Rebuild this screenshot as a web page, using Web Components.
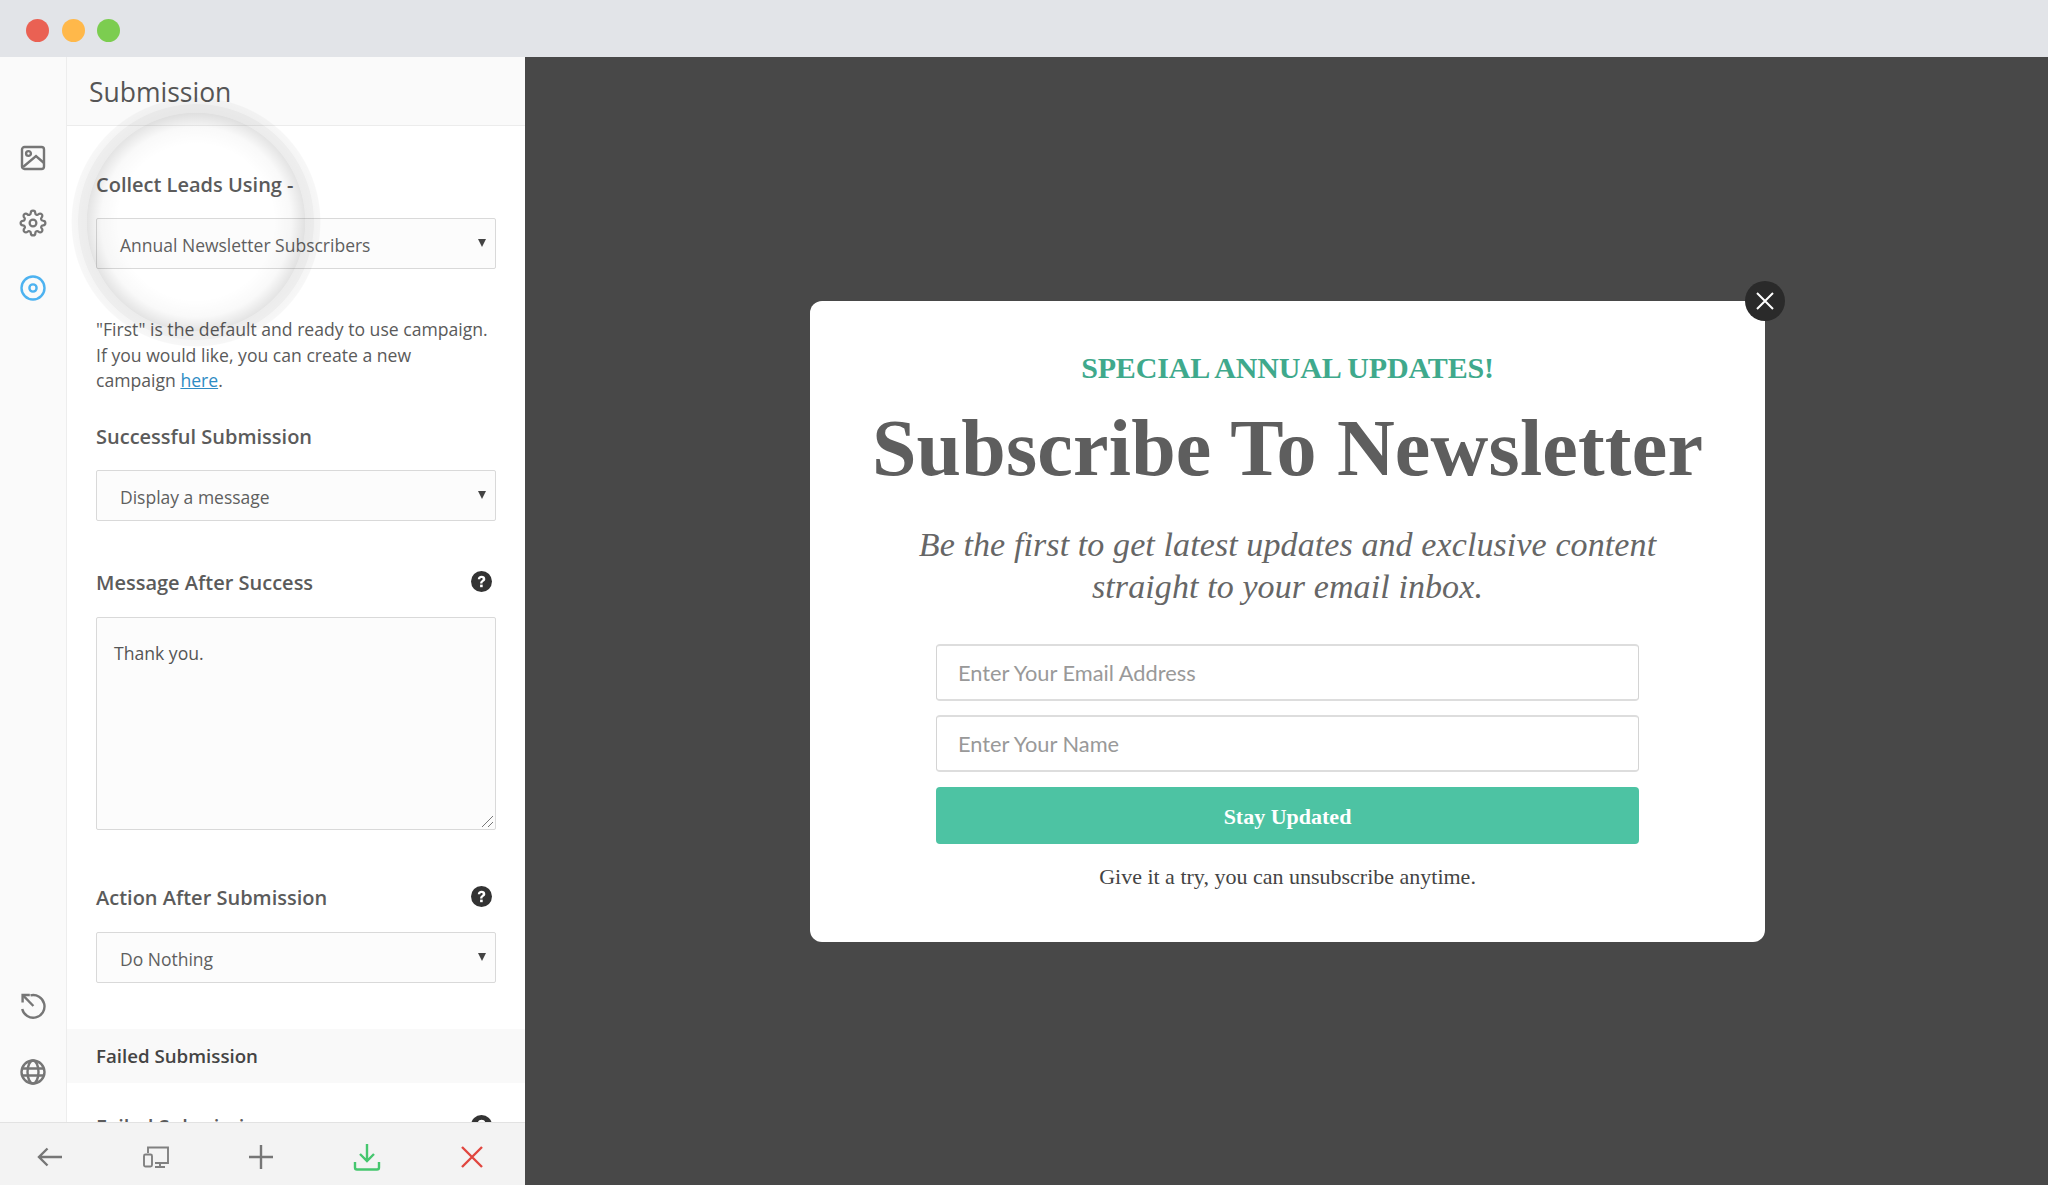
<!DOCTYPE html>
<html>
<head>
<meta charset="utf-8">
<title>Submission</title>
<style>
  html, body { margin: 0; height: 100%; overflow: hidden; }
  body { font-family: "Open Sans", sans-serif; }
</style>
</head>
<body>
<app-window>
  <side-panel slot="panel">
    <field-label>Collect Leads Using -</field-label>
    <field-select class="gap">Annual Newsletter Subscribers</field-select>
    <panel-note>"First" is the default and ready to use campaign. If you would like, you can create a new campaign <a href="#" style="color:#2e8cc4">here</a>.</panel-note>
    <field-label style="margin-top:29px">Successful Submission</field-label>
    <field-select class="gap" style="margin-top:19px">Display a message</field-select>
    <field-label style="margin-top:48px" help>Message After Success</field-label>
    <textarea-box class="gap">Thank you.</textarea-box>
    <field-label style="margin-top:54px" help>Action After Submission</field-label>
    <field-select class="gap">Do Nothing</field-select>
    <section-band>Failed Submission</section-band>
    <field-label style="margin-top:30px" help>Failed Submission</field-label>
  </side-panel>
  <popup-card slot="canvas"></popup-card>
</app-window>

<script>
(function() {
  const icons = {
    image: '<rect x="2" y="2" width="22" height="22" rx="2.5"/><circle cx="8.5" cy="8.5" r="2.4"/><path d="M3 22 16 11l8 7"/>',
    gear: '<g transform="translate(-.5 -.5) scale(1.125)" stroke-width="2"><circle cx="12" cy="12" r="3"/><path d="M19.4 15a1.65 1.65 0 0 0 .33 1.82l.06.06a2 2 0 0 1 0 2.83 2 2 0 0 1-2.83 0l-.06-.06a1.65 1.65 0 0 0-1.82-.33 1.65 1.65 0 0 0-1 1.51V21a2 2 0 0 1-2 2 2 2 0 0 1-2-2v-.09A1.65 1.65 0 0 0 9 19.4a1.65 1.65 0 0 0-1.82.33l-.06.06a2 2 0 0 1-2.83 0 2 2 0 0 1 0-2.83l.06-.06a1.65 1.65 0 0 0 .33-1.82 1.65 1.65 0 0 0-1.51-1H3a2 2 0 0 1-2-2 2 2 0 0 1 2-2h.09A1.65 1.65 0 0 0 4.6 9a1.65 1.65 0 0 0-.33-1.82l-.06-.06a2 2 0 0 1 0-2.83 2 2 0 0 1 2.83 0l.06.06a1.65 1.65 0 0 0 1.82.33H9a1.65 1.65 0 0 0 1-1.51V3a2 2 0 0 1 2-2 2 2 0 0 1 2 2v.09a1.65 1.65 0 0 0 1 1.51 1.65 1.65 0 0 0 1.82-.33l.06-.06a2 2 0 0 1 2.83 0 2 2 0 0 1 0 2.83l-.06.06a1.65 1.65 0 0 0-.33 1.82V9a1.65 1.65 0 0 0 1.51 1H21a2 2 0 0 1 2 2 2 2 0 0 1-2 2h-.09a1.65 1.65 0 0 0-1.51 1z"/></g>',
    target: '<circle cx="13" cy="13" r="11.5"/><circle cx="13" cy="13" r="3.6"/>',
    history: '<path d="M10.5 2.4A11.3 11.3 0 1 1 2.2 16"/><path d="M2.6 9.5V2h7.2"/><path d="M2.8 2.2 13.4 13"/>',
    globe: '<circle cx="13" cy="13" r="11.5"/><ellipse cx="13" cy="13" rx="5.5" ry="11.5"/><path d="M2 9.5h22M2 16.5h22"/>',
    back: '<path d="M25 13H2M10.5 4.5 2 13l8.5 8.5"/>',
    devices: '<path d="M5 9V3.5h20V19H12"/><rect x="1" y="10.5" width="8" height="12" rx="1.5"/><path d="M12 23h10M17 19v4"/>',
    plus: '<path d="M13 1v24M1 13h24"/>',
    save: '<path d="M13 0v17M6 10l7 7 7-7"/><path d="M1 18v5.5a2 2 0 0 0 2 2h20a2 2 0 0 0 2-2V18"/>',
    close: '<path d="M3 3l20 20M23 3 3 23"/>'
  };

  function icon(name, color, width) {
    return `<svg width="26" height="26" viewBox="0 0 26 26" fill="none" stroke="${color}" stroke-width="${width || 2}" style="overflow:visible">${icons[name]}</svg>`;
  }

  const helpIcon = `<svg width="21" height="21" viewBox="0 0 21 21"><circle cx="10.5" cy="10.5" r="10.5" fill="#333"/><path d="M6.8 8.2c0-2.1 1.6-3.4 3.8-3.4 2.1 0 3.7 1.2 3.7 3.1 0 1.5-.9 2.2-1.9 2.8-.7.5-1 .8-1 1.7H9.1c0-1.6.5-2.3 1.5-3 .7-.5 1.1-.8 1.1-1.4 0-.6-.5-1-1.2-1-.8 0-1.2.4-1.3 1.2z" fill="#fff"/><rect x="9.1" y="13.6" width="2.6" height="2.6" fill="#fff"/></svg>`;

  class FieldSelect extends HTMLElement {
    constructor() {
      super();
      this.attachShadow({ mode: "open" }).innerHTML = `
        <style>
          :host { display: flex; align-items: center; box-sizing: border-box; width: 400px; height: 51px;
            padding: 3px 0 0 23px; border: 1px solid #d9d9d9; border-radius: 2px; background: #fcfcfc;
            font-size: 17.5px; color: #5f5f5f; position: relative; }
          :host(.gap) { margin-top: 20px; }
          i { position: absolute; right: 9px; top: 20px; width: 0; height: 0;
            border-left: 4.5px solid transparent; border-right: 4.5px solid transparent; border-top: 8px solid #444; }
        </style><slot></slot><i></i>`;
    }
  }

  class FieldLabel extends HTMLElement {
    constructor() {
      super();
      this.attachShadow({ mode: "open" }).innerHTML = `
        <style>
          :host { display: flex; justify-content: space-between; align-items: center; height: 28px;
            font-size: 20px; font-weight: 600; color: #5b5b5b; }
          span { display: flex; margin-right: 4px; margin-top: -2px; }
        </style><slot></slot><span></span>`;
      if (this.hasAttribute("help")) this.shadowRoot.querySelector("span").innerHTML = helpIcon;
    }
  }

  class PanelNote extends HTMLElement {
    constructor() {
      super();
      this.attachShadow({ mode: "open" }).innerHTML = `
        <style>
          :host { display: block; margin-top: 48px; width: 392px; font-size: 17.6px; line-height: 25.5px; color: #5a5a5a; }
        </style><slot></slot>`;
    }
  }

  class SectionBand extends HTMLElement {
    constructor() {
      super();
      this.attachShadow({ mode: "open" }).innerHTML = `
        <style>
          :host { display: block; margin: 46px -29px 0; padding: 13px 29px; height: 54px; box-sizing: border-box;
            background: #f9f9f9; font-size: 18.7px; font-weight: 600; color: #444; line-height: 28px; }
        </style><slot></slot>`;
    }
  }

  class RailIcon extends HTMLElement {
    constructor() {
      super();
      this.attachShadow({ mode: "open" }).innerHTML = `
        <style>:host { display: flex; width: 26px; height: 26px; } svg { display: block; }</style>
        ${icon(this.getAttribute("name"), this.getAttribute("color") || "#767676", this.getAttribute("sw") || 2.4)}`;
    }
  }

  class TextareaBox extends HTMLElement {
    constructor() {
      super();
      this.attachShadow({ mode: "open" }).innerHTML = `
        <style>
          :host { display: block; box-sizing: border-box; width: 400px; height: 213px; padding: 23px 17px;
            border: 1px solid #d9d9d9; border-radius: 2px; background: #fcfcfc; font-size: 17.6px; line-height: 25px;
            color: #555; position: relative; }
          :host(.gap) { margin-top: 20px; }
          svg { position: absolute; right: 1px; bottom: 1px; }
        </style><slot></slot>
        <svg width="14" height="14" viewBox="0 0 14 14" stroke="#777" stroke-width="1"><path d="M2 13 13 2M8 13l5-5"/></svg>`;
    }
  }

  // the magnifier sits over the first field, that is why it is absolute
  class LensRing extends HTMLElement {
    constructor() {
      super();
      this.attachShadow({ mode: "open" }).innerHTML = `
        <style>
          :host { position: absolute; left: 71px; top: 40px; width: 250px; height: 250px; border-radius: 50%;
            pointer-events: none;
            background: radial-gradient(circle closest-side, rgba(0,0,0,0) 62%, rgba(0,0,0,.025) 76%, rgba(0,0,0,.105) 87%,
              rgba(0,0,0,.075) 87.6%, rgba(0,0,0,.065) 94%, rgba(0,0,0,.04) 94.6%, rgba(0,0,0,.03) 99%, rgba(0,0,0,0) 100%); }
        </style>`;
    }
  }

  class SidePanel extends HTMLElement {
    constructor() {
      super();
      this.attachShadow({ mode: "open" }).innerHTML = `
        <style>
          :host { display: grid; grid-template-columns: 67px 1fr; grid-template-rows: 1fr 63px; width: 525px;
            height: 100%; background: #fff; position: relative; overflow: hidden; }
          .rail { display: flex; flex-direction: column; align-items: center; padding: 88px 1px 0 0; gap: 39px;
            background: #fafafa; border-right: 1px solid #ededed; }
          .rail .push { margin-top: auto; }
          .rail .last { margin-top: 1px; margin-bottom: 37px; }
          .main { overflow: hidden; min-width: 0; }
          .head { height: 69px; box-sizing: border-box; padding: 15px 0 0 22px; background: #fafafa;
            border-bottom: 1px solid #ececec; font-size: 26.5px; color: #555; line-height: 40px; }
          .body { padding: 44px 29px 0; }
          .foot { grid-column: 1 / 3; display: flex; justify-content: space-between; align-items: center;
            padding: 6px 40px 0 37px; background: #f3f3f3; border-top: 1px solid #e2e2e2; }
        </style>
        <div class="rail">
          <rail-icon name="image"></rail-icon>
          <rail-icon name="gear"></rail-icon>
          <rail-icon name="target" color="#4db2f0"></rail-icon>
          <rail-icon class="push" name="history"></rail-icon>
          <rail-icon class="last" name="globe"></rail-icon>
        </div>
        <div class="main">
          <div class="head">Submission</div>
          <div class="body"><slot></slot></div>
        </div>
        <div class="foot">
          <rail-icon name="back"></rail-icon>
          <rail-icon name="devices" sw="1.9" color="#808080"></rail-icon>
          <rail-icon name="plus"></rail-icon>
          <rail-icon name="save" color="#45c66e"></rail-icon>
          <rail-icon name="close" color="#e0463f"></rail-icon>
        </div>
        <lens-ring></lens-ring>`;
    }
  }

  class PopupCard extends HTMLElement {
    constructor() {
      super();
      this.attachShadow({ mode: "open" }).innerHTML = `
        <style>
          :host { display: flex; flex-direction: column; align-items: center; box-sizing: border-box; width: 955px; height: 641px;
            padding-top: 46px; background: #fff; border-radius: 12px; position: relative;
            font-family: "Liberation Serif", serif; text-align: center; color: #5c5c5c; }
          .kicker { font-size: 30px; line-height: 42px; font-weight: 700; color: #3fa98c; height: 42px; letter-spacing: -.15px; }
          h1 { margin: 13px 0 0; font-size: 80px; line-height: 92px; font-weight: 700; letter-spacing: .2px; color: #5e5e5e; }
          .sub { margin: 30px 0 0; font-size: 34px; line-height: 42px; font-style: italic; color: #666; letter-spacing: .1px; }
          .form { margin-top: 36px; width: 703px; display: flex; flex-direction: column; gap: 14px; }
          .input { box-sizing: border-box; height: 57px; padding: 0 21px; display: flex; align-items: center; border: 1px solid #d4d4d4;
            border-top: 2px solid #ddd; border-bottom: 2px solid #ddd; border-radius: 4px; background: #fff;
            font-family: Lato, sans-serif; font-size: 21.8px; color: #999; }
          .btn { height: 57px; box-sizing: border-box; margin-top: 1px; padding-top: 2px; display: flex; align-items: center; justify-content: center; border-radius: 4px; background: #4dc3a3;
            color: #fff; font-size: 22px; font-weight: 700; }
          .hint { margin-top: 19px; font-size: 22px; line-height: 28px; color: #444; }
          .x { position: absolute; right: -20px; top: -20px; width: 40px; height: 40px; border-radius: 50%; background: #2a2a2a;
            display: flex; align-items: center; justify-content: center; }
        </style>
        <div class="kicker">SPECIAL ANNUAL UPDATES!</div>
        <h1>Subscribe To Newsletter</h1>
        <div class="sub">Be the first to get latest updates and exclusive content<br>straight to your email inbox.</div>
        <div class="form">
          <div class="input">Enter Your Email Address</div>
          <div class="input">Enter Your Name</div>
          <div class="btn">Stay Updated</div>
        </div>
        <div class="hint">Give it a try, you can unsubscribe anytime.</div>
        <div class="x"><svg width="20" height="20" viewBox="0 0 20 20" stroke="#fff" stroke-width="2"><path d="M2 2l16 16M18 2 2 18"/></svg></div>`;
    }
  }

  class AppWindow extends HTMLElement {
    constructor() {
      super();
      this.attachShadow({ mode: "open" }).innerHTML = `
        <style>
          :host { display: grid; grid-template-rows: 57px 1fr; height: 1185px; }
          .bar { display: flex; align-items: center; gap: 12.5px; padding: 4px 0 0 26px; background: #e2e4e8; box-sizing: border-box; }
          .bar i { width: 23px; height: 23px; border-radius: 50%; }
          .stage { display: grid; grid-template-columns: 525px 1fr; min-height: 0; }
          .canvas { background: #484848; padding: 244px 0 0 285px; min-width: 0; }
        </style>
        <div class="bar"><i style="background:#ea6153"></i><i style="background:#ffb84a"></i><i style="background:#7ccd50"></i></div>
        <div class="stage">
          <slot name="panel"></slot>
          <div class="canvas"><slot name="canvas"></slot></div>
        </div>`;
    }
  }

  window.customElements.define("field-select", FieldSelect);
  window.customElements.define("field-label", FieldLabel);
  window.customElements.define("panel-note", PanelNote);
  window.customElements.define("section-band", SectionBand);
  window.customElements.define("rail-icon", RailIcon);
  window.customElements.define("textarea-box", TextareaBox);
  window.customElements.define("lens-ring", LensRing);
  window.customElements.define("side-panel", SidePanel);
  window.customElements.define("popup-card", PopupCard);
  window.customElements.define("app-window", AppWindow);
})();
</script>
</body>
</html>
